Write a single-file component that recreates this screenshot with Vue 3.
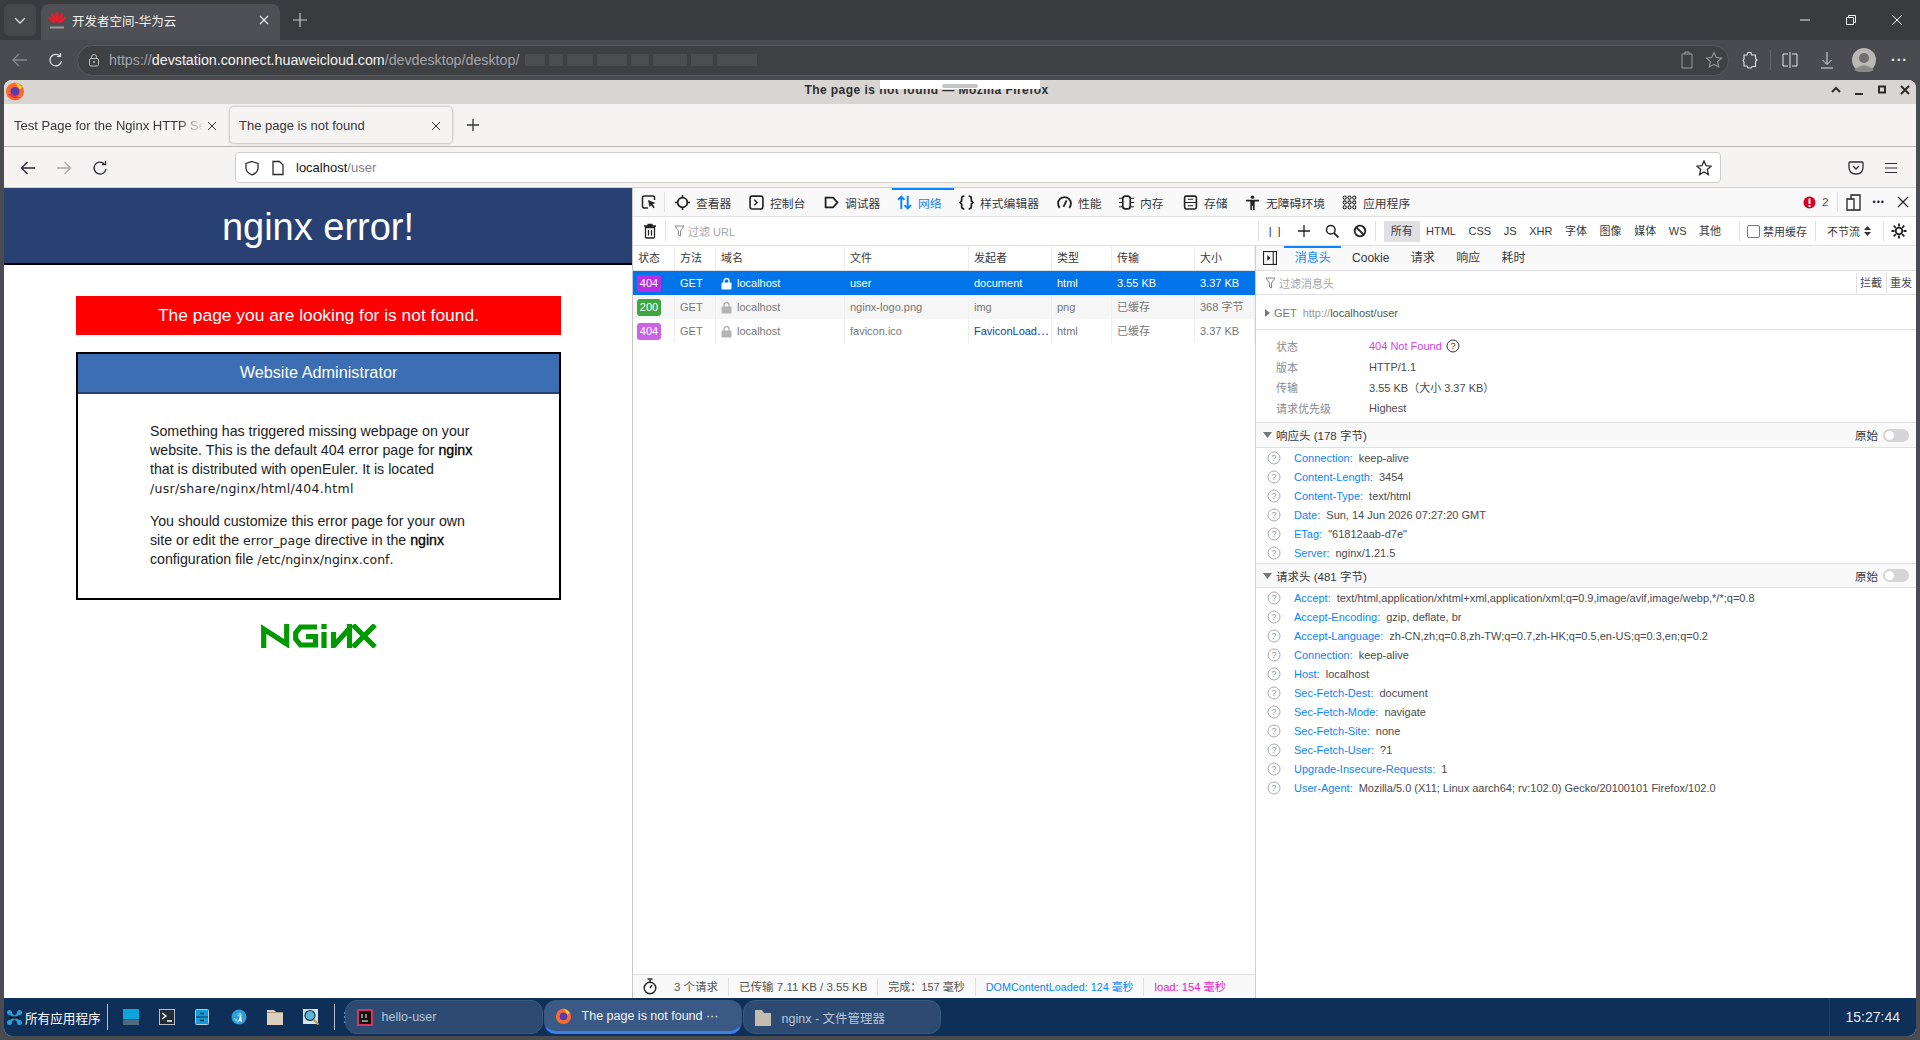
<template>
  <div class="screen">
    <header class="edge-tabs">
      <div class="edge-tablist"><svg width="14" height="14" viewBox="0 0 14 14"><path d="M2 5l5 5 5-5" fill="none" stroke="#dcdcdc" stroke-width="1.3"/></svg></div>
      <div class="edge-tab">
        <svg class="hw-logo" width="18" height="19" viewBox="0 0 18 19"><g fill="#e0202c"><ellipse cx="9" cy="5.500" rx="1.500" ry="5"/><ellipse cx="5.800" cy="6.500" rx="1.700" ry="5" transform="rotate(-24 5.800 6.500)"/><ellipse cx="12.200" cy="6.500" rx="1.700" ry="5" transform="rotate(24 12.200 6.500)"/><ellipse cx="3.800" cy="9" rx="1.600" ry="4.500" transform="rotate(-52 3.800 9)"/><ellipse cx="14.200" cy="9" rx="1.600" ry="4.500" transform="rotate(52 14.200 9)"/></g><rect x="2" y="15.500" width="14" height="2" fill="#9a9a9a"/></svg>
        <span class="edge-tab-title">开发者空间-华为云</span>
        <svg width="12" height="12" viewBox="0 0 12 12"><path d="M2 2l8 8M10 2l-8 8" stroke="#eee" stroke-width="1.1"/></svg>
      </div>
      <svg class="edge-plus" width="16" height="16" viewBox="0 0 16 16"><path d="M8 1v14M1 8h14" stroke="#c8c8c8" stroke-width="1.2"/></svg>
      <div class="grow"></div>
      <div class="edge-winbtns">
        <svg width="12" height="12" viewBox="0 0 12 12"><path d="M1 6h10" stroke="#eee"/></svg>
        <svg width="12" height="12" viewBox="0 0 12 12"><path d="M1.500 3.500h7v7h-7zM3.500 3.500v-2h7v7h-2" fill="none" stroke="#eee"/></svg>
        <svg width="12" height="12" viewBox="0 0 12 12"><path d="M1 1l10 10M11 1L1 11" stroke="#eee"/></svg>
      </div>
    </header>

    <div class="edge-toolbar">
      <svg class="e-back" width="18" height="18" viewBox="0 0 18 18"><path d="M16 9H2M8 3L2 9l6 6" fill="none" stroke="#85868a" stroke-width="1.300"/></svg>
      <svg class="e-reload" width="16" height="16" viewBox="0 0 16 16"><path d="M13.500 9a5.800 5.800 0 1 1-1.600-5M12.500 1v3.500H9" fill="none" stroke="#e4e4e4" stroke-width="1.200"/></svg>
      <div class="edge-url">
        <svg width="14" height="14" viewBox="0 0 14 14"><rect x="2.500" y="5.500" width="9" height="7.500" rx="1.500" fill="none" stroke="#bbb"/><path d="M4.500 5.500V4a2.500 2.500 0 0 1 5 0v1.500" fill="none" stroke="#bbb"/><circle cx="7" cy="9" r="1" fill="#bbb"/></svg>
        <span class="url-text"><span class="dim">https://</span><span class="bright">devstation.connect.huaweicloud.com</span><span class="dim">/devdesktop/desktop/</span></span>
        <div class="url-blur"><i v-for="(w, n) in blurBlocks" :key="n" :style="{ width: w + 'px' }"></i></div>
        <div class="grow"></div>
        <svg width="14" height="20" viewBox="0 0 14 20"><path d="M2 4h10v14H2zM5 4V2h4v2" fill="none" stroke="#9a9a9e"/></svg>
        <svg class="url-star" width="18" height="18" viewBox="0 0 18 18"><path d="M9 1.500l2.300 5 5.200.6-3.900 3.600 1.100 5.300L9 13.300 4.300 16l1.100-5.300L1.500 7.100l5.200-.6z" fill="none" stroke="#9a9a9e" stroke-width="1.100"/></svg>
      </div>
      <svg class="e-ext" width="16" height="20" viewBox="0 0 16 20"><path d="M6 2.500h3l.5 2.500h4v3.500l1.500 1.500-1.500 1.500v5H10l-1 1.500H6L5 16H2v-4l-1-1.500L2 9V5h3z" fill="none" stroke="#e4e4e4" stroke-width="1.100"/></svg>
      <span class="e-sep"></span>
      <svg class="e-split" width="16" height="18" viewBox="0 0 16 18"><path d="M6 3H1v12h5M10 3h5v12h-5M8 1v16" fill="none" stroke="#e4e4e4"/></svg>
      <svg class="e-down" width="14" height="18" viewBox="0 0 14 18"><path d="M7 1v12M2.500 9L7 13.500 11.500 9M1 17h12" fill="none" stroke="#ddd"/></svg>
      <svg class="e-avatar" width="24" height="24" viewBox="0 0 24 24"><circle cx="12" cy="12" r="12" fill="#b9b8b4"/><circle cx="12" cy="10" r="5" fill="#6f706d"/><path d="M2 22q10-9 20 0-10 5-20 0z" fill="#8a8a86"/></svg>
      <span class="e-more">···</span>
    </div>

    <main class="ff-window">
      <div class="ff-title">
        <svg class="fox" width="20" height="20" viewBox="0 0 20 20"><circle cx="10" cy="10.500" r="9" fill="#ff6a2b"/><path d="M10 1q5 2 7 5-1 3-3 2Q12 4 10 1z" fill="#ffcb2e"/><circle cx="10" cy="10.500" r="4.500" fill="#5b3ab5"/><path d="M3 13q4 6 12 3-5 0-7-3z" fill="#e8334a"/></svg>
        <div class="ff-title-text">The page is not found — Mozilla Firefox</div>
        <div class="ff-winbtns">
          <svg width="12" height="12" viewBox="0 0 12 12"><path d="M2 8l4-4 4 4" fill="none" stroke="#2b2b2b" stroke-width="2"/></svg>
          <svg width="12" height="12" viewBox="0 0 12 12"><path d="M2 10h8" stroke="#2b2b2b" stroke-width="2"/></svg>
          <svg width="12" height="12" viewBox="0 0 12 12"><rect x="3" y="2.500" width="6" height="6" fill="none" stroke="#2b2b2b" stroke-width="2"/></svg>
          <svg width="12" height="12" viewBox="0 0 12 12"><path d="M2 2l8 8M10 2l-8 8" stroke="#2b2b2b" stroke-width="2"/></svg>
        </div>
        <div class="conn-bar"><i></i></div>
      </div>

      <div class="ff-tabs">
        <div class="ff-tab">
          <span class="ff-tab-title fade">Test Page for the Nginx HTTP Server</span>
          <svg width="12" height="12" viewBox="0 0 12 12"><path d="M2 2l8 8M10 2l-8 8" stroke="#333"/></svg>
        </div>
        <div class="ff-tab active">
          <span class="ff-tab-title">The page is not found</span>
          <svg width="12" height="12" viewBox="0 0 12 12"><path d="M2 2l8 8M10 2l-8 8" stroke="#333"/></svg>
        </div>
        <svg class="ff-plus" width="14" height="14" viewBox="0 0 14 14"><path d="M7 1v12M1 7h12" stroke="#333" stroke-width="1.300"/></svg>
      </div>

      <div class="ff-toolbar">
        <svg class="f-back" width="16" height="16" viewBox="0 0 16 16"><path d="M15 8H1.500M7.500 2l-6 6 6 6" fill="none" stroke="#2b2a33" stroke-width="1.300"/></svg>
        <svg class="f-fwd" width="16" height="16" viewBox="0 0 16 16"><path d="M1 8h13.500M8.500 2l6 6-6 6" fill="none" stroke="#aaa" stroke-width="1.300"/></svg>
        <svg class="f-reload" width="16" height="16" viewBox="0 0 16 16"><path d="M14 9a6 6 0 1 1-2-5.500M13.500 1v3.500H10" fill="none" stroke="#2b2a33" stroke-width="1.300"/></svg>
        <div class="ff-url">
          <svg width="16" height="16" viewBox="0 0 16 16"><path d="M8 1.500l6 2v4.500q0 4.500-6 7-6-2.500-6-7V3.500z" fill="none" stroke="#2b2a33" stroke-width="1.300"/></svg>
          <svg class="f-doc" width="14" height="16" viewBox="0 0 14 16"><path d="M2 1.500h6.500L12 5v9.500H2z" fill="none" stroke="#2b2a33" stroke-width="1.300"/></svg>
          <span class="f-host">localhost<span class="f-path">/user</span></span>
          <div class="grow"></div>
          <svg width="16" height="16" viewBox="0 0 16 16"><path d="M8 1l2.100 4.700 5 .5-3.800 3.400 1.100 5L8 12l-4.400 2.600 1.100-5L.9 6.200l5-.5z" fill="none" stroke="#2b2a33" stroke-width="1.300"/></svg>
        </div>
        <svg class="f-pocket" width="16" height="16" viewBox="0 0 16 16"><path d="M2 2h12q1 0 1 1v4q0 7-7 7T1 7V3q0-1 1-1zM5 6l3 3 3-3" fill="none" stroke="#2b2a33" stroke-width="1.300"/></svg>
        <svg class="f-menu" width="14" height="14" viewBox="0 0 14 14"><path d="M1 2.500h12M1 7h12M1 11.500h12" stroke="#2b2a33" stroke-width="1.200"/></svg>
      </div>

      <div class="ff-body">
        <section class="page">
          <h1 class="page-head">nginx error!</h1>
          <div class="page-content">
            <h3 class="alert">The page you are looking for is not found.</h3>
            <div class="admin">
              <h2 class="admin-head">Website Administrator</h2>
              <div class="admin-body">
                <p>Something has triggered missing webpage on your website. This is the default 404 error page for <strong>nginx</strong> that is distributed with openEuler. It is located <tt class="wide">/usr/share/nginx/html/404.html</tt></p>
                <p>You should customize this error page for your own site or edit the <tt>error_page</tt> directive in the <strong>nginx</strong> configuration file <tt>/etc/nginx/nginx.conf</tt>.</p>
              </div>
            </div>
            <svg class="nginx-logo" width="116" height="24" viewBox="0 0 116 24" role="img" aria-label="NGINX">
              <g fill="none" stroke="#009900" stroke-width="5.200">
                <path d="M2.700 24V5l23 15V0"/>
                <path d="M56 3H39.500L34.700 9v6l4.800 6H54.500v-8.500H45"/>
                <path d="M63 24V8"/>
                <path d="M72.500 8v14L88 5M88.500 0v24"/>
                <path d="M92 1l22 22M114 1L92 23"/>
              </g>
              <rect x="60.400" y="0" width="5.200" height="5" fill="#009900"/>
            </svg>
          </div>
        </section>

        <section class="devtools">
          <div class="dt-top">
            <svg class="dt-pick" width="16" height="16" viewBox="0 0 16 16"><path d="M7 14H3q-1.500 0-1.500-1.500v-9Q1.500 2 3 2h9q1.500 0 1.500 1.500V6" fill="none" stroke="#222" stroke-width="1.500"/><path d="M7 6l7.500 3-3 1.200 2.300 3-1.300 1-2.300-3L8.500 13z" fill="#222"/></svg>
            <span class="dt-vsep"></span>
            <div v-for="t in topTabs" :key="t.label" class="dt-tab" :class="{ on: t.on }" :style="{ width: t.w + 'px' }">
              <svg width="15" height="15" viewBox="0 0 14 14" v-html="t.icon"></svg>
              <span>{{ t.label }}</span>
            </div>
            <div class="grow"></div>
            <svg width="13" height="13" viewBox="0 0 13 13"><circle cx="6.500" cy="6.500" r="6" fill="#d70022"/><rect x="5.500" y="2.500" width="2" height="5.500" fill="#fff"/><rect x="5.500" y="9" width="2" height="2" fill="#fff"/></svg>
            <span class="err-count">2</span>
            <span class="dt-vsep sep-dock"></span>
            <svg width="15" height="17" viewBox="0 0 15 17"><path d="M1 5h7v11H1zM5 5V1h9v15H8" fill="none" stroke="#222" stroke-width="1.300"/></svg>
            <span class="dt-more">•••</span>
            <svg class="dt-close" width="12" height="12" viewBox="0 0 12 12"><path d="M1 1l10 10M11 1L1 11" stroke="#222" stroke-width="1.200"/></svg>
          </div>

          <div class="dt-filter">
            <svg class="dt-trash" width="14" height="16" viewBox="0 0 14 16"><path d="M2.500 4.500h9V14q0 1-1 1h-7q-1 0-1-1zM1 3h12M5 3V1.500h4V3M5.500 7v5.500M8.500 7v5.500" fill="none" stroke="#222" stroke-width="1.300"/></svg>
            <span class="dt-vsep"></span>
            <svg class="filter-ico" width="11" height="12" viewBox="0 0 11 12"><path d="M1 1h9L6.500 6v5l-2-1V6z" fill="none" stroke="#888"/></svg>
            <span class="hint">过滤 URL</span>
            <div class="grow"></div>
            <span class="dt-vsep"></span>
            <span class="pause">| &nbsp;|</span>
            <svg class="act" width="14" height="14" viewBox="0 0 14 14"><path d="M7 1v12M1 7h12" stroke="#222" stroke-width="1.300"/></svg>
            <svg class="act" width="14" height="14" viewBox="0 0 14 14"><circle cx="5.800" cy="5.800" r="4.300" fill="none" stroke="#222" stroke-width="1.500"/><path d="M9 9l4.500 4.500" stroke="#222" stroke-width="1.800"/></svg>
            <svg class="act" width="14" height="14" viewBox="0 0 14 14"><circle cx="7" cy="7" r="5.300" fill="none" stroke="#222" stroke-width="1.800"/><path d="M3.300 3.300l7.400 7.400" stroke="#222" stroke-width="1.800"/></svg>
            <span class="dt-vsep"></span>
            <div class="types">
              <span v-for="t in typeFilters" :key="t" class="type" :class="{ on: t === '所有' }">{{ t }}</span>
            </div>
            <span class="dt-vsep"></span>
            <span class="check"></span>
            <span class="nocache">禁用缓存</span>
            <span class="dt-vsep"></span>
            <span class="throttle">不节流<svg width="7" height="10" viewBox="0 0 7 10"><path d="M3.500 0L7 4H0zM3.500 10L0 6h7z" fill="#333"/></svg></span>
            <span class="dt-vsep"></span>
            <svg class="gear" width="16" height="16" viewBox="0 0 16 16"><circle cx="8" cy="8" r="3.300" fill="none" stroke="#222" stroke-width="1.800"/><path d="M8 .5v3M8 12.500v3M.5 8h3M12.500 8h3M2.700 2.700l2.100 2.100M11.200 11.200l2.100 2.100M13.300 2.700l-2.100 2.100M4.800 11.200l-2.100 2.100" stroke="#222" stroke-width="1.800"/></svg>
          </div>

          <div class="dt-main">
            <div class="net">
              <div class="net-table">
                <div class="net-row net-head">
                  <span v-for="h in netHead" :key="h">{{ h }}</span>
                </div>
                <div v-for="(r, n) in netRows" :key="n" class="net-row" :class="{ sel: r.sel, alt: n === 1 }">
                  <span><b class="badge" :class="r.badge">{{ r.status }}</b></span>
                  <span>GET</span>
                  <span class="host-cell"><svg width="11" height="13" viewBox="0 0 11 13"><path d="M3 6V4a2.500 2.500 0 0 1 5 0v2" fill="none" stroke="currentColor" stroke-width="1.300"/><rect x=".5" y="5.500" width="10" height="7" rx="1" fill="currentColor"/></svg>localhost</span>
                  <span>{{ r.file }}</span>
                  <span :class="{ link: r.link }">{{ r.cause }}</span>
                  <span>{{ r.type }}</span>
                  <span>{{ r.transfer }}</span>
                  <span>{{ r.size }}</span>
                </div>
              </div>
              <div class="grow"></div>
              <div class="net-status">
                <svg class="watch" width="14" height="17" viewBox="0 0 14 17"><circle cx="7" cy="10" r="5.800" fill="none" stroke="#222" stroke-width="1.400"/><path d="M4.500 1h5M7 2v3M7 10l2-3" stroke="#222" stroke-width="1.400" fill="none"/></svg>
                <span class="st">3 个请求</span>
                <span class="st">已传输 7.11 KB / 3.55 KB</span>
                <span class="st tight">完成：157 毫秒</span>
                <span class="st blue">DOMContentLoaded: 124 毫秒</span>
                <span class="st pink">load: 154 毫秒</span>
              </div>
            </div>

            <aside class="detail">
              <div class="detail-tabs">
                <svg class="panel-ico" width="14" height="14" viewBox="0 0 13 13"><rect x=".5" y=".5" width="12" height="12" fill="none" stroke="#222"/><path d="M9.500 1v11" stroke="#222"/><path d="M4 4l3 2.500L4 9z" fill="#222"/></svg>
                <span v-for="t in detailTabs" :key="t" class="d-tab" :class="{ on: t === '消息头' }">{{ t }}</span>
              </div>
              <div class="detail-filter">
                <svg width="11" height="12" viewBox="0 0 11 12"><path d="M1 1h9L6.500 6v5l-2-1V6z" fill="none" stroke="#888"/></svg>
                <span class="hint">过滤消息头</span>
                <div class="grow"></div>
                <span class="d-btn">拦截</span>
                <span class="d-btn">重发</span>
              </div>
              <div class="req-line">
                <svg width="5" height="8" viewBox="0 0 5 8"><path d="M0 0l5 4-5 4z" fill="#777"/></svg>
                <span class="gray">GET</span>
                <span><span class="lt">http://</span><span class="dk">localhost/user</span></span>
              </div>
              <div class="summary">
                <div class="sum-row"><span class="sum-k">状态</span><span class="sum-v purple">404 Not Found<svg width="14" height="14" viewBox="0 0 14 14"><circle cx="7" cy="7" r="6" fill="none" stroke="#333"/><text x="7" y="10.300" text-anchor="middle" font-size="9.500" fill="#333">?</text></svg></span></div>
                <div class="sum-row"><span class="sum-k">版本</span><span class="sum-v">HTTP/1.1</span></div>
                <div class="sum-row"><span class="sum-k">传输</span><span class="sum-v">3.55 KB（大小 3.37 KB）</span></div>
                <div class="sum-row"><span class="sum-k">请求优先级</span><span class="sum-v">Highest</span></div>
              </div>
              <template v-for="g in headerGroups" :key="g.title">
                <div class="group-head">
                  <svg width="9" height="6" viewBox="0 0 9 6"><path d="M0 0h9L4.500 6z" fill="#777"/></svg>
                  <span>{{ g.title }}</span>
                  <div class="grow"></div>
                  <span>原始</span>
                  <span class="toggle"><i></i></span>
                </div>
                <div v-for="h in g.rows" :key="h[0]" class="hdr-row">
                  <svg width="14" height="14" viewBox="0 0 14 14"><circle cx="7" cy="7" r="6" fill="none" stroke="#aaa"/><text x="7" y="10.300" text-anchor="middle" font-size="9.500" fill="#999">?</text></svg>
                  <span class="hdr-k">{{ h[0] }}:</span>
                  <span class="hdr-v">{{ h[1] }}</span>
                </div>
              </template>
            </aside>
          </div>
        </section>
      </div>

      <footer class="taskbar">
        <svg class="tb-logo" width="15" height="15" viewBox="0 0 15 15"><g fill="#2f9bd8"><circle cx="2.500" cy="2.500" r="2.500"/><circle cx="12.500" cy="2.500" r="2.500"/><circle cx="2.500" cy="12.500" r="2.500"/><circle cx="12.500" cy="12.500" r="2.500"/></g><path d="M3 3l9 9M12 3l-9 9" stroke="#2f9bd8" stroke-width="2.500"/><rect x="3" y="6.500" width="9" height="2" fill="#111"/></svg>
        <span class="tb-apps">所有应用程序</span>
        <span class="tb-sep"></span>
        <div class="tb-launch">
          <svg width="16" height="16" viewBox="0 0 16 16"><rect width="16" height="10.500" fill="#0ea5dc"/><rect y="11" width="16" height="5" fill="#4f6a7c"/></svg>
          <svg width="16" height="16" viewBox="0 0 16 16"><rect x=".5" y=".5" width="15" height="15" fill="#222c36" stroke="#b8bec4"/><path d="M3 4l4 3-4 3M8 12h5" fill="none" stroke="#fff" stroke-width="1.300"/></svg>
          <svg width="16" height="16" viewBox="0 0 16 16"><rect x=".5" y=".5" width="13" height="15" rx="1" fill="#119bd8" stroke="#b8c8d4"/><path d="M1 8h12" stroke="#0c3550"/><path d="M5 4.500h4M5 11.500h4" stroke="#0c3550" stroke-width="1.500"/></svg>
          <svg width="16" height="16" viewBox="0 0 16 16"><circle cx="8" cy="8" r="7.500" fill="#2f9ed6"/><path d="M9 3l2 3-2 2-3-1zM3 9l3 1 1 3-3-1z" fill="#7cc8ea"/><path d="M10 5L6 15l2-3 3 1z" fill="#eef2f5"/></svg>
          <svg width="16" height="16" viewBox="0 0 16 16"><path d="M0 1h7l2 2h7v13H0z" fill="#dbcfbd"/><path d="M0 3.500h16" stroke="#a89b86"/></svg>
          <svg width="16" height="16" viewBox="0 0 16 16"><rect width="15" height="15" fill="#d6e6ea"/><circle cx="7" cy="6.500" r="5" fill="#58b8e0" stroke="#1b2f3f" stroke-width="1.200"/><path d="M10.500 10.500l5 5" stroke="#c9a04a" stroke-width="2.200"/></svg>
        </div>
        <span class="tb-sep tb-sep2"></span>
        <span class="tb-grip">⋮</span>
        <div class="tb-task">
          <svg width="16" height="17" viewBox="0 0 16 17"><rect width="16" height="17" rx="1" fill="#d8345f"/><rect x="2" y="2" width="12" height="13" fill="#111"/><path d="M5 5v4M9 5v4M5 12h6" stroke="#fff"/></svg>
          <span>hello-user</span>
        </div>
        <div class="tb-task current">
          <svg width="17" height="18" viewBox="0 0 20 20"><circle cx="10" cy="10.500" r="9" fill="#ff6a2b"/><path d="M10 1q5 2 7 5-1 3-3 2Q12 4 10 1z" fill="#ffcb2e"/><circle cx="10" cy="10.500" r="4.500" fill="#5b3ab5"/></svg>
          <span>The page is not found ···</span>
        </div>
        <div class="tb-task files">
          <svg width="16" height="17" viewBox="0 0 16 17"><path d="M0 1h7l2 3h7v13H0z" fill="#c4bcae"/></svg>
          <span>nginx - 文件管理器</span>
        </div>
        <div class="grow"></div>
        <span class="tb-clock">15:27:44</span>
      </footer>
    </main>
  </div>
</template>

<script setup>
const blurBlocks = [20, 14, 26, 30, 18, 34, 22, 40]

const topTabs = [
  { label: '查看器', w: 74, icon: '<circle cx="7" cy="7" r="4.500" fill="none" stroke="#222" stroke-width="1.700"/><path d="M7 0v2.500M7 11.500V14M0 7h2.500M11.500 7H14" stroke="#222" stroke-width="1.400"/>' },
  { label: '控制台', w: 75, icon: '<rect x="1" y="1" width="12" height="12" rx="2" fill="none" stroke="#222" stroke-width="1.500"/><path d="M5 4.500L7.500 7 5 9.500" fill="none" stroke="#222" stroke-width="1.300"/>' },
  { label: '调试器', w: 73, icon: '<path d="M1.500 2.500h7l4 4.500-4 4.500h-7z" fill="none" stroke="#222" stroke-width="1.700"/>' },
  { label: '网络', w: 62, on: true, icon: '<path d="M4 13V1.500M1 4.500l3-3 3 3M10 1v11.500M7 9.500l3 3 3-3" fill="none" stroke="#0a84ff" stroke-width="1.800"/>' },
  { label: '样式编辑器', w: 98, icon: '<path d="M5 1Q2.500 1 2.500 3v2.500L1 7l1.500 1.500V11q0 2 2.500 2M9 1q2.500 0 2.500 2v2.500L13 7l-1.500 1.500V11q0 2-2.500 2" fill="none" stroke="#222" stroke-width="1.600"/>' },
  { label: '性能', w: 62, icon: '<path d="M2.500 12A6 6 0 1 1 11.500 12" fill="none" stroke="#222" stroke-width="1.700"/><path d="M6 11l3-6" stroke="#222" stroke-width="1.700"/>' },
  { label: '内存', w: 64, icon: '<rect x="3.500" y="1" width="7" height="12" rx="2.500" fill="none" stroke="#222" stroke-width="1.600"/><path d="M0 3h3M0 7h3M0 11h3M11 3h3M11 7h3M11 11h3" stroke="#222"/>' },
  { label: '存储', w: 62, icon: '<rect x="1.500" y="1" width="11" height="12" rx="1.500" fill="none" stroke="#222" stroke-width="1.500"/><path d="M1.500 7h11M4.500 4h5M4.500 10h5" stroke="#222"/>' },
  { label: '无障碍环境', w: 97, icon: '<circle cx="7" cy="2" r="1.600" fill="#222"/><path d="M1 4.500h12v1.500H9v8H7.500v-4h-1v4H5V6H1z" fill="#222"/>' },
  { label: '应用程序', w: 86, icon: '<g fill="none" stroke="#222"><circle cx="2.500" cy="2.500" r="1.500"/><circle cx="7" cy="2.500" r="1.500"/><circle cx="11.500" cy="2.500" r="1.500"/><circle cx="2.500" cy="7" r="1.500"/><circle cx="7" cy="7" r="1.500"/><circle cx="11.500" cy="7" r="1.500"/><circle cx="2.500" cy="11.500" r="1.500"/><circle cx="7" cy="11.500" r="1.500"/><circle cx="11.500" cy="11.500" r="1.500"/></g>' },
]

const typeFilters = ['所有', 'HTML', 'CSS', 'JS', 'XHR', '字体', '图像', '媒体', 'WS', '其他']
const netHead = ['状态', '方法', '域名', '文件', '发起者', '类型', '传输', '大小']
const detailTabs = ['消息头', 'Cookie', '请求', '响应', '耗时']

const netRows = [
  { status: 404, badge: 'b404s', file: 'user', cause: 'document', type: 'html', transfer: '3.55 KB', size: '3.37 KB', sel: true },
  { status: 200, badge: 'b200', file: 'nginx-logo.png', cause: 'img', type: 'png', transfer: '已缓存', size: '368 字节' },
  { status: 404, badge: 'b404', file: 'favicon.ico', cause: 'FaviconLoad⋯', type: 'html', transfer: '已缓存', size: '3.37 KB', link: true },
]

const headerGroups = [
  {
    title: '响应头 (178 字节)',
    rows: [
      ['Connection', 'keep-alive'],
      ['Content-Length', '3454'],
      ['Content-Type', 'text/html'],
      ['Date', 'Sun, 14 Jun 2026 07:27:20 GMT'],
      ['ETag', '"61812aab-d7e"'],
      ['Server', 'nginx/1.21.5'],
    ],
  },
  {
    title: '请求头 (481 字节)',
    rows: [
      ['Accept', 'text/html,application/xhtml+xml,application/xml;q=0.9,image/avif,image/webp,*/*;q=0.8'],
      ['Accept-Encoding', 'gzip, deflate, br'],
      ['Accept-Language', 'zh-CN,zh;q=0.8,zh-TW;q=0.7,zh-HK;q=0.5,en-US;q=0.3,en;q=0.2'],
      ['Connection', 'keep-alive'],
      ['Host', 'localhost'],
      ['Sec-Fetch-Dest', 'document'],
      ['Sec-Fetch-Mode', 'navigate'],
      ['Sec-Fetch-Site', 'none'],
      ['Sec-Fetch-User', '?1'],
      ['Upgrade-Insecure-Requests', '1'],
      ['User-Agent', 'Mozilla/5.0 (X11; Linux aarch64; rv:102.0) Gecko/20100101 Firefox/102.0'],
    ],
  },
]
</script>

<style>
html, body { margin: 0; background: #4a4b50; overflow: hidden; }
</style>

<style scoped>
.screen {
  width: 1920px;
  height: 1040px;
  overflow: hidden;
  background: #4a4b50;
  font-family: "Liberation Sans", "Noto Sans CJK SC", sans-serif;
  color: #38383d;
}
.grow { flex: 1; }

/* outer edge browser */
.edge-tabs { height: 40px; background: #3a3b3f; display: flex; align-items: flex-end; box-sizing: border-box; }
.edge-tablist { width: 32px; height: 32px; margin: 0 5px 4px 4px; background: #47484c; border-radius: 6px; display: flex; align-items: center; justify-content: center; }
.edge-tab { width: 239px; height: 36px; background: #4f5055; border-radius: 8px 8px 0 0; display: flex; align-items: center; box-sizing: border-box; padding: 0 10px 4px 7px; color: #f0f0f0; font-size: 12.500px; }
.hw-logo { margin-right: 6px; }
.edge-tab-title { flex: 1; }
.edge-plus { margin: 0 0 12px 12px; }
.edge-winbtns { display: flex; gap: 34px; margin: 0 17px 14px 0; }

.edge-toolbar { height: 40px; background: #4a4b50; display: flex; align-items: center; }
.e-back { margin-left: 11px; }
.e-reload { margin-left: 19px; }
.edge-url { margin-left: 13px; width: 1652px; height: 31px; box-sizing: border-box; background: #3f4044; border: 1px solid #58595d; border-radius: 16px; display: flex; align-items: center; padding: 0 1px 0 9px; font-size: 14.250px; }
.url-text { margin-left: 8px; white-space: nowrap; }
.dim { color: #a4a5a8; }
.bright { color: #f2f2f2; }
.url-blur { display: flex; gap: 4px; height: 20px; margin-left: 6px; align-items: center; opacity: .45; }
.url-blur i { height: 12px; background: #5c5d61; }
.url-star { margin-left: 11px; margin-right: 4px; }
.e-ext { margin-left: 13px; }
.e-sep { width: 1px; height: 20px; background: #66676b; margin-left: 12px; }
.e-split { margin-left: 11px; }
.e-down { margin-left: 22px; }
.e-avatar { margin-left: 18px; }
.e-more { margin-left: 15px; color: #eee; font-size: 14px; font-weight: bold; letter-spacing: 1px; }

/* inner firefox window */
.ff-window { margin-left: 4px; width: 1912px; height: 956px; display: flex; flex-direction: column; border-radius: 8px; overflow: hidden; background: #fff; }
.ff-title { position: relative; height: 24px; background: #d8d5d2; display: flex; align-items: center; flex: none; }
.fox { margin: 0 0 2px 1px; }
.ff-title-text { flex: 1; text-align: center; font-size: 12px; font-weight: bold; letter-spacing: .45px; color: #2e2e2e; padding: 0 2px 4px 0; }
.conn-bar { position: absolute; left: 876px; top: 0; width: 160px; height: 9px; background: #fff; display: flex; justify-content: center; padding-top: 4px; box-sizing: border-box; }
.conn-bar i { width: 36px; height: 4px; border-radius: 2px; background: #c4c4c4; }
.ff-winbtns { display: flex; gap: 11px; margin: 0 5px 4px 0; }

.ff-tabs { height: 43px; flex: none; background: #f5f4f2; border-bottom: 1px solid #b9b7b4; box-sizing: border-box; display: flex; align-items: center; font-size: 13px; }
.ff-tab { width: 226px; height: 36px; box-sizing: border-box; padding: 1px 12px 0 10px; display: flex; align-items: center; }
.ff-tab-title { flex: 1; white-space: nowrap; overflow: hidden; }
.fade { -webkit-mask-image: linear-gradient(to right, #000 165px, transparent 190px); mask-image: linear-gradient(to right, #000 165px, transparent 190px); }
.ff-tab.active { width: 222px; background: #f5f4f2; border-radius: 4px; box-shadow: 0 0 3px rgba(0,0,0,.4); padding: 1px 10px 0 9px; }
.ff-plus { margin-left: 14px; }

.ff-toolbar { height: 41px; flex: none; background: #f5f4f2; border-bottom: 1px solid #d4d2cf; box-sizing: border-box; display: flex; align-items: center; padding-top: 1px; }
.f-back { margin-left: 16px; }
.f-fwd { margin-left: 20px; }
.f-reload { margin-left: 20px; }
.ff-url { margin-left: 127px; width: 1486px; height: 31px; background: #fff; border: 1px solid #cfcdc9; border-radius: 4px; box-sizing: border-box; display: flex; align-items: center; padding: 0 8px 0 8px; }
.f-doc { margin-left: 11px; }
.f-host { margin-left: 11px; font-size: 13px; color: #15141a; }
.f-path { color: #80808a; }
.f-pocket { margin-left: 127px; }
.f-menu { margin-left: 20px; }

.ff-body { flex: 1; display: flex; min-height: 0; }

/* nginx page */
.page { width: 628px; flex: none; font-family: "Liberation Sans", sans-serif; }
.page-head { margin: 0; height: 75px; background: #294172; border-bottom: 2px solid #000; color: #fff; text-align: center; font-size: 38px; font-weight: 400; line-height: 78px; }
.page-content { padding: 31px 71px 0 72px; display: flex; flex-direction: column; align-items: center; }
.alert { margin: 0; width: 100%; height: 39px; background: #f00; color: #fff; font-size: 17.400px; font-weight: 400; line-height: 39px; text-align: center; }
.admin { margin-top: 17px; width: 100%; border: 2px solid #000; box-sizing: border-box; height: 248px; }
.admin-head { margin: 0; height: 38px; background: #3c6eb4; border-bottom: 2px solid #294172; color: #fff; font-size: 16.250px; font-weight: 400; line-height: 36px; text-align: center; }
.admin-body { padding: 28px 0 0 72px; font-size: 14.200px; line-height: 19px; color: #222; }
.admin-body p { margin: 0 0 14px; width: 334px; }
.admin-body strong { font-weight: 400; color: #000; -webkit-text-stroke: .3px #000; }
.admin-body tt { font-family: "DejaVu Sans", sans-serif; font-size: 12.500px; }
.admin-body tt.wide { letter-spacing: .3px; }
.nginx-logo { margin-top: 24px; }

/* devtools */
.devtools { flex: 1; min-width: 0; display: flex; flex-direction: column; border-left: 1px solid #c8c8c8; font-size: 11px; background: #fff; }
.dt-top { height: 29px; flex: none; background: #f9f9fa; border-bottom: 1px solid #e0e0e2; display: flex; align-items: center; font-size: 11.800px; box-sizing: border-box; }
.dt-pick { margin-left: 8px; flex: none; }
.dt-vsep { width: 1px; height: 20px; background: #e0e0e2; margin: 0 5px 0 7px; flex: none; }
.dt-tab { height: 100%; flex: none; display: flex; align-items: center; gap: 6px; padding-left: 5px; box-sizing: border-box; color: #38383d; }
.dt-tab svg { flex: none; }
.dt-tab.on { color: #0a84ff; box-shadow: inset 0 2px 0 #0a84ff; }
.err-count { margin: 0 4px 0 6px; color: #555; }
.sep-dock { margin: 0 8px 0 4px; }
.dt-more { margin-left: 12px; font-size: 9px; letter-spacing: 1px; color: #222; }
.dt-close { margin: 0 7px 0 12px; }

.dt-filter { height: 29px; flex: none; background: #fff; border-bottom: 1px solid #e0e0e2; display: flex; align-items: center; box-sizing: border-box; }
.dt-trash { margin-left: 10px; }
.dt-filter > .dt-vsep { margin: 0 8px; }
.filter-ico { flex: none; }
.hint { color: #a5a5a8; margin-left: 3px; font-size: 11px; }
.pause { margin: 0 2px 0 2px; color: #222; font-size: 11px; white-space: nowrap; }
.act { margin-left: 14px; }
.types { display: flex; align-items: center; padding-right: 3.600px; }
.type { height: 21px; line-height: 21px; padding: 0 6.300px; color: #38383d; }
.type.on { background: #e0e0e2; padding: 0 7px; }
.check { width: 11px; height: 11px; border: 1.500px solid #777; border-radius: 2px; margin-left: -1px; flex: none; }
.nocache { margin-left: 3px; }
.throttle { margin: 0 4px 0 3px; display: flex; align-items: center; gap: 4px; }
.gear { margin: 0 9px 0 -1px; }

.dt-main { flex: 1; display: flex; min-height: 0; }
.net { width: 622px; flex: none; display: flex; flex-direction: column; border-right: 1px solid #d0d0d2; }
.net-row { display: grid; grid-template-columns: 42px 41px 129px 124px 83px 60px 83px 60px; height: 24px; align-items: center; color: #777; }
.net-row > span { padding-left: 5px; white-space: nowrap; overflow: hidden; height: 100%; line-height: 24px; border-right: 1px solid #eee; box-sizing: border-box; }
.net-row.alt { background: #f6f6f7; }
.net-head { height: 25px; border-bottom: 1px solid #e0e0e2; background: #fff; color: #38383d; box-sizing: border-box; }
.net-head > span { line-height: 24px; }
.net-row.sel { background: #0074e8; color: #fff; }
.net-row.sel > span { border-right-color: #0074e8; }
.badge { display: inline-block; width: 24px; height: 17px; line-height: 17px; border-radius: 3px; color: #fff; text-align: center; font-weight: 400; margin-left: -1px; }
.b404s { background: #b82ee5; }
.b404 { background: #cc62e8; }
.b200 { background: #3fa73f; }
.host-cell { display: flex; align-items: center; gap: 5px; color: #777; }
.host-cell svg { flex: none; color: #b4b4b4; }
.sel .host-cell { color: #fff; }
.sel .host-cell svg { color: #fff; }
.link { color: #0f3fb0; }
.net-status { height: 24px; flex: none; background: #f9f9fa; border-top: 1px solid #e0e0e2; display: flex; align-items: center; box-sizing: border-box; font-size: 11.500px; overflow: hidden; }
.watch { margin: 0 17px 0 10px; flex: none; }
.st { padding: 0 10px 0 0; margin-right: 10px; border-right: 1px solid #e0e0e2; line-height: 18px; color: #555; white-space: nowrap; flex: none; }
.st.tight { font-size: 11px; }
.st.blue { color: #0a84ff; font-size: 10.800px; }
.st.pink { color: #e31ac6; border: 0; font-size: 11.200px; }

.detail { flex: 1; min-width: 0; display: flex; flex-direction: column; overflow: hidden; }
.detail-tabs { height: 25px; flex: none; background: #f9f9fa; border-bottom: 1px solid #e0e0e2; display: flex; align-items: stretch; box-sizing: border-box; }
.panel-ico { margin: 5px 7px 0 7px; flex: none; }
.d-tab { padding: 0 10.700px; line-height: 24px; font-size: 12px; color: #38383d; white-space: nowrap; }
.d-tab.on { color: #0a84ff; box-shadow: inset 0 2px 0 #0a84ff; }
.detail-filter { height: 24px; flex: none; display: flex; align-items: center; padding-left: 9px; border-bottom: 1px solid #e0e0e2; box-sizing: border-box; }
.d-btn { padding: 0 4px 0 3px; border-left: 1px solid #e0e0e2; line-height: 20px; color: #444; }
.req-line { height: 35px; flex: none; display: flex; align-items: center; gap: 4px; padding: 1px 0 0 9px; border-bottom: 1px solid #e0e0e2; box-sizing: border-box; }
.gray { color: #777; margin-right: -3px; }
.req-line > span:last-child { margin-left: 5px; }
.lt { color: #999; }
.dk { color: #555; }
.summary { height: 93px; flex: none; padding: 6px 0 0 20px; box-sizing: border-box; border-bottom: 1px solid #e0e0e2; }
.sum-row { height: 20.500px; display: flex; align-items: center; }
.sum-k { width: 93px; color: #8a8a8f; }
.sum-v { color: #4a4a4f; display: flex; align-items: center; gap: 4px; white-space: pre; }
.purple { color: #d53ee8; }
.group-head { height: 25px; flex: none; background: #f9f9fa; border-bottom: 1px solid #e0e0e2; display: flex; align-items: center; gap: 4px; padding: 0 7px 0 7px; color: #38383d; box-sizing: border-box; font-size: 11.500px; }
.hdr-row + .group-head { margin-top: 1px; border-top: 1px solid #e0e0e2; }
.toggle { width: 26px; height: 13px; border-radius: 7px; background: #d5d5d7; margin-left: 1px; display: flex; align-items: center; padding-left: 2px; box-sizing: border-box; }
.toggle i { width: 9px; height: 9px; border-radius: 50%; background: #fff; }
.hdr-row { height: 19px; flex: none; display: flex; align-items: center; padding-left: 11px; white-space: nowrap; }
.hdr-k { margin-left: 13px; color: #0a84ff; }
.hdr-v { margin-left: 6px; color: #4a4a4f; }

/* taskbar */
.taskbar { height: 38px; flex: none; background: #0e2f57; display: flex; align-items: center; color: #d6dfe9; font-size: 12.600px; }
.tb-logo { margin-left: 3px; flex: none; }
.tb-apps { margin-left: 3px; color: #fff; }
.tb-sep { width: 1px; height: 26px; background: #b5c0cc; margin-left: 6px; }
.tb-launch { display: flex; align-items: center; gap: 20px; margin-left: 15px; }
.tb-sep2 { margin-left: 15px; }
.tb-grip { margin: 0 2px 0 3px; font-size: 14px; color: #9fb0c3; width: 5px; }
.tb-task { width: 198px; height: 34px; margin-right: 1px; box-sizing: border-box; padding-left: 11px; display: flex; align-items: center; gap: 9px; background: #2c4a72; border: 1px solid #3b587d; border-radius: 12px; font-size: 12.500px; color: #b9c6d6; white-space: nowrap; }
.tb-task.current { background: #3a5a85; color: #f2f5f8; border-bottom: 3px solid #3b7fe8; padding-left: 10px; gap: 10px; }
.tb-task.files { gap: 11px; }
.tb-clock { padding: 0 16px; border-left: 1px solid #24415f; height: 38px; line-height: 38px; font-size: 14px; color: #e6ebf1; }
</style>
